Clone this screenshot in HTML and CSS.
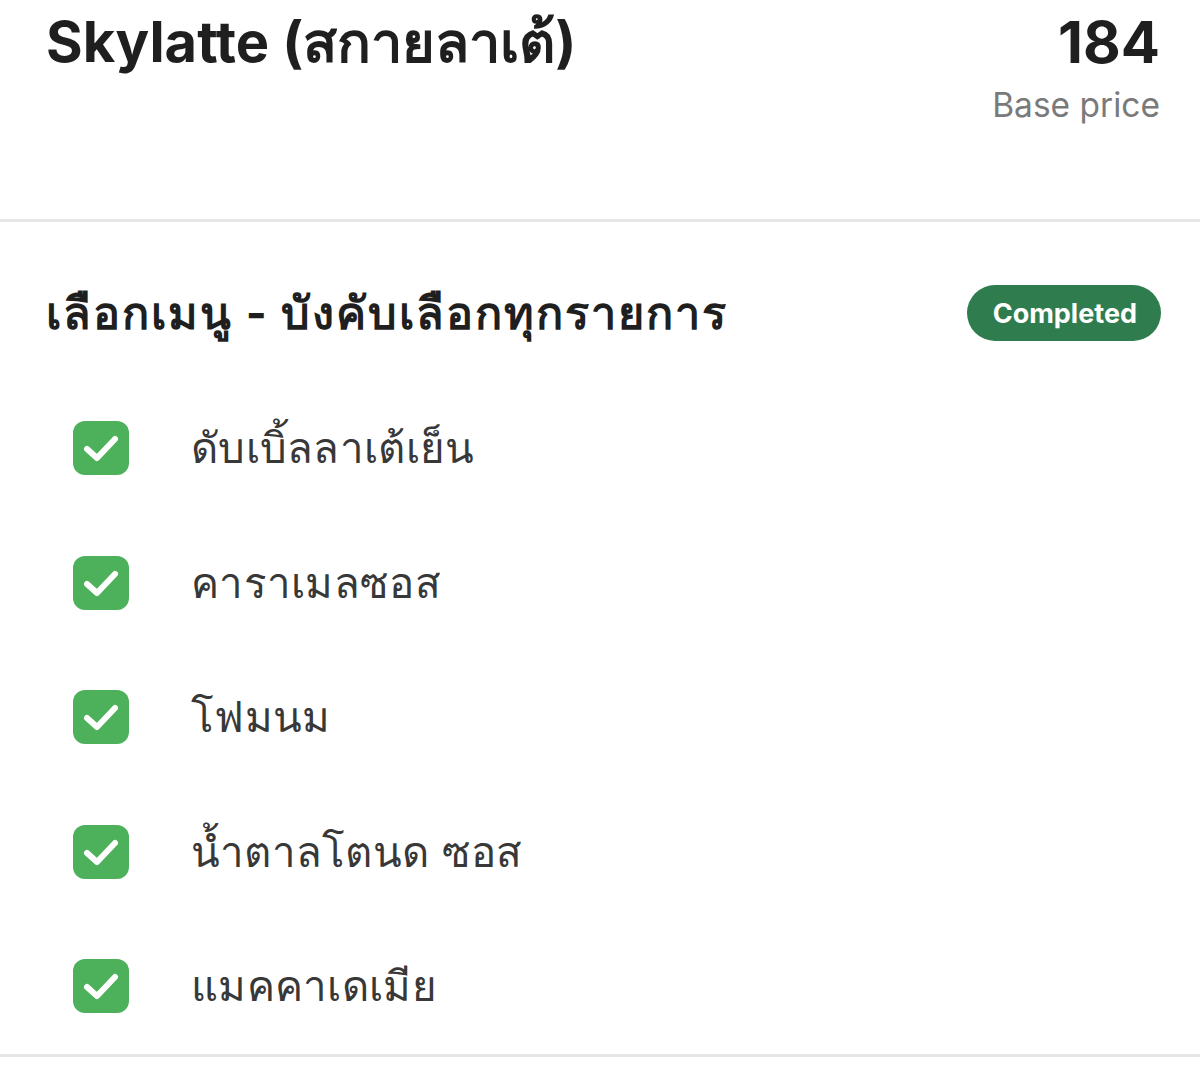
FILE: index.html
```html
<!DOCTYPE html>
<html lang="th">
<head>
<meta charset="utf-8">
<link rel="stylesheet" href="styles.css">
</head>
<body>
<div class="header">
  <h1 class="title">Skylatte (สกายลาเต้)</h1>
  <div class="price">
    <div class="price-value">184</div>
    <div class="price-label">Base price</div>
  </div>
</div>
<div class="section">
  <div class="section-head">
    <h2 class="section-title">เลือกเมนู - บังคับเลือกทุกรายการ</h2>
    <span class="badge">Completed</span>
  </div>
  <ul class="items">
    <li class="item"><span class="check"><svg viewBox="0 0 56 54" width="56" height="54"><path d="M14 28 L24 37 L42 18" fill="none" stroke="#fff" stroke-width="6" stroke-linecap="round" stroke-linejoin="round"/></svg></span><span class="label">ดับเบิ้ลลาเต้เย็น</span></li>
    <li class="item"><span class="check"><svg viewBox="0 0 56 54" width="56" height="54"><path d="M14 28 L24 37 L42 18" fill="none" stroke="#fff" stroke-width="6" stroke-linecap="round" stroke-linejoin="round"/></svg></span><span class="label">คาราเมลซอส</span></li>
    <li class="item"><span class="check"><svg viewBox="0 0 56 54" width="56" height="54"><path d="M14 28 L24 37 L42 18" fill="none" stroke="#fff" stroke-width="6" stroke-linecap="round" stroke-linejoin="round"/></svg></span><span class="label">โฟมนม</span></li>
    <li class="item"><span class="check"><svg viewBox="0 0 56 54" width="56" height="54"><path d="M14 28 L24 37 L42 18" fill="none" stroke="#fff" stroke-width="6" stroke-linecap="round" stroke-linejoin="round"/></svg></span><span class="label">น้ำตาลโตนด ซอส</span></li>
    <li class="item"><span class="check"><svg viewBox="0 0 56 54" width="56" height="54"><path d="M14 28 L24 37 L42 18" fill="none" stroke="#fff" stroke-width="6" stroke-linecap="round" stroke-linejoin="round"/></svg></span><span class="label">แมคคาเดเมีย</span></li>
  </ul>
</div>
</body>
</html>
```
FILE: styles.css
```css
html, body {
  margin: 0;
  padding: 0;
  background: #fff;
}
body {
  font-family: "Inter", "Noto Sans", "Liberation Sans", sans-serif;
  color: #1f1f1f;
}
.header {
  display: flex;
  justify-content: space-between;
  align-items: flex-start;
  height: 222px;
  box-sizing: border-box;
  padding: 7px 40px 0 46px;
  border-bottom: 3px solid #e6e6e6;
}
.title {
  margin: 0;
  font-size: 56px;
  font-weight: 700;
  line-height: 70px;
  letter-spacing: 0;
  color: #1f1f1f;
}
.price {
  text-align: right;
}
.price-value {
  font-size: 58px;
  font-weight: 700;
  line-height: 70px;
  color: #1f1f1f;
}
.price-label {
  font-size: 33.5px;
  line-height: 40px;
  color: #7a7a7a;
  margin-top: 8px;
}
.section {
  padding: 63px 39px 0 46px;
  border-bottom: 3px solid #e6e6e6;
}
.section-head {
  display: flex;
  justify-content: space-between;
  align-items: center;
  height: 56px;
}
.section-title {
  margin: 0;
  font-size: 45px;
  font-weight: 700;
  letter-spacing: 2px;
  color: #1f1f1f;
}
.badge {
  display: inline-flex;
  align-items: center;
  height: 56px;
  padding: 0 24px 0 26px;
  border-radius: 28px;
  background: #2f7d4e;
  color: #fff;
  font-size: 27px;
  font-weight: 700;
}
.items {
  list-style: none;
  margin: 40px 0 0 0;
  padding: 0 0 0 27px;
}
.item {
  display: flex;
  align-items: center;
  height: 134.5px;
}
.check {
  display: flex;
  width: 56px;
  height: 54px;
  border-radius: 12px;
  background: #4cb15a;
  flex: none;
}
.label {
  margin-left: 62px;
  font-size: 42px;
  letter-spacing: 0.3px;
  color: #383838;
}
```
